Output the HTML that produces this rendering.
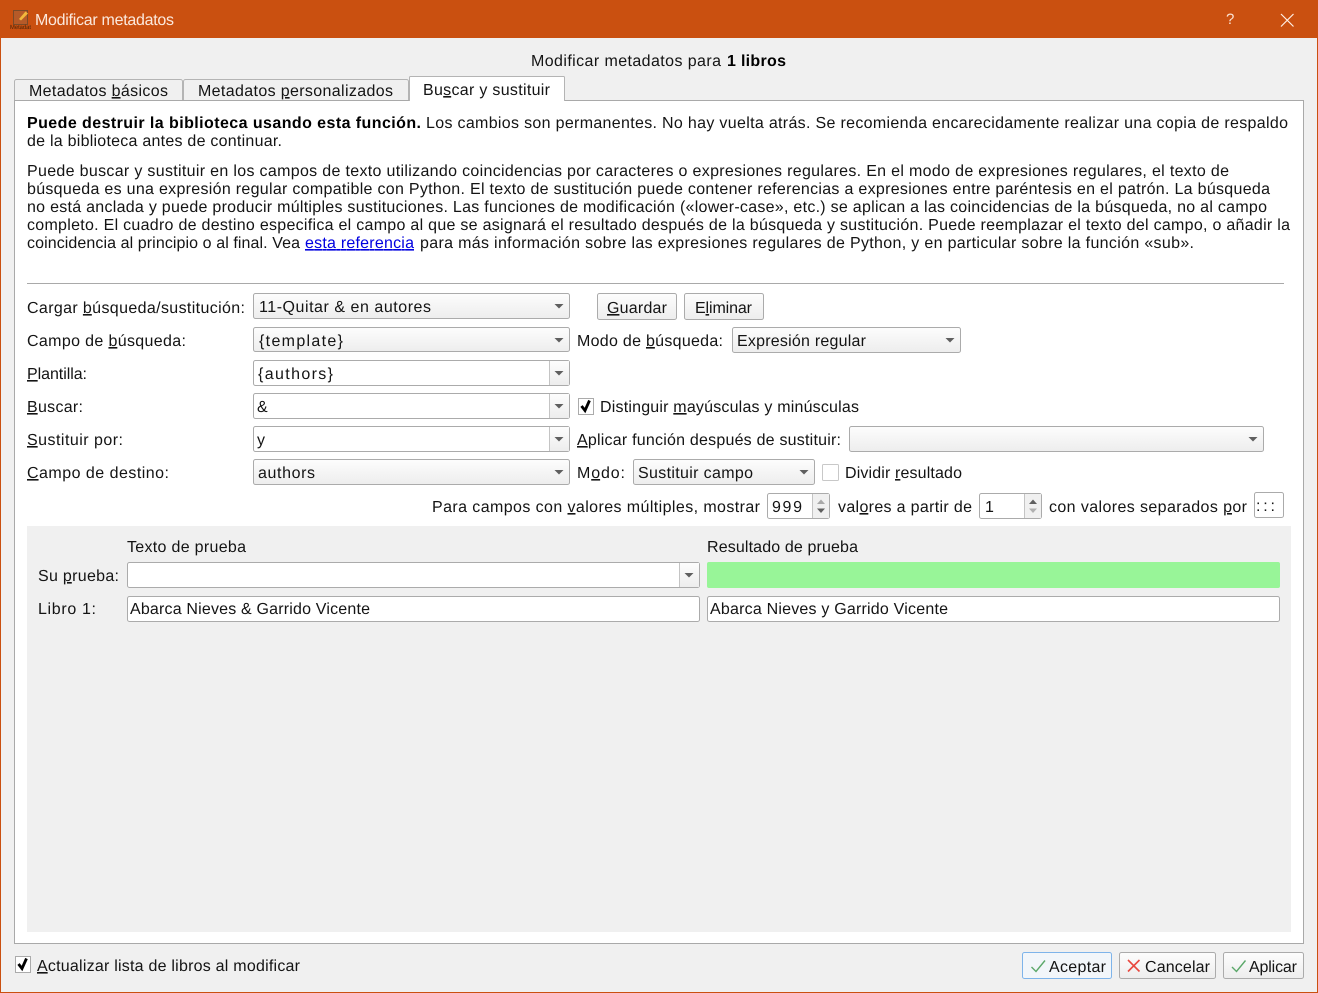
<!DOCTYPE html>
<html lang="es"><head><meta charset="utf-8"><title>Modificar metadatos</title>
<style>
html,body{margin:0;padding:0;width:1318px;height:993px;overflow:hidden;background:#f0f0f0}
svg{display:block}
text{font-family:"Liberation Sans",sans-serif;font-size:16px;fill:#141414;white-space:pre;text-rendering:geometricPrecision}
.u{text-decoration:underline}
.b{font-weight:bold;fill:#000}
.box{fill:#fff;stroke:#ababab}
.cb{fill:url(#g);stroke:#ababab}
.sep{stroke:#c4c4c4}
.ar{fill:#5f5f5f}
</style></head><body>
<svg width="1318" height="993" viewBox="0 0 1318 993" xmlns="http://www.w3.org/2000/svg">
<defs>
<linearGradient id="g" x1="0" y1="0" x2="0" y2="1"><stop offset="0" stop-color="#fdfdfd"/><stop offset="1" stop-color="#ededed"/></linearGradient>
<path id="a" class="ar" d="M-4.500 -2H4.500L0 2.500Z"/>
</defs>
<!-- window -->
<rect x="0" y="0" width="1318" height="993" fill="#ca5010"/>
<rect x="1" y="38" width="1316" height="954" fill="#f0f0f0"/>
<!-- icon -->
<rect x="13.500" y="10.500" width="14" height="14" fill="#b65a28" stroke="#7a4a28"/>
<path d="M19 19L25.500 11.500L28 13.500L21 20.500Z" fill="#f2b83c"/>
<text x="10" y="29" textLength="21" lengthAdjust="spacingAndGlyphs" style="font-size:6px;fill:#4a2408">Metadat</text>
<text x="35" y="25" textLength="139" style="fill:#fbe8dc">Modificar metadatos</text>
<text x="1226" y="24" textLength="8" style="fill:#fbe0cf;font-size:15px">?</text>
<path d="M1281 14L1293.500 26.500M1293.500 14L1281 26.500" stroke="#fff0e6" stroke-width="1.200" fill="none"/>
<!-- heading -->
<text x="531" y="66" textLength="190">Modificar metadatos para</text>
<text x="727" y="66" textLength="59" class="b">1 libros</text>
<!-- tabs -->
<rect x="14.500" y="79.500" width="168" height="22" rx="2" fill="#f0f0f0" stroke="#b4b4b4"/>
<rect x="183.500" y="79.500" width="225" height="22" rx="2" fill="#f0f0f0" stroke="#b4b4b4"/>
<rect x="14.500" y="100.500" width="1289" height="843" fill="#fff" stroke="#a9a9a9"/>
<path d="M409.500 101V77.500Q409.500 76.500 410.500 76.500H563.500Q564.500 76.500 564.500 77.500V101" fill="#fff" stroke="#b4b4b4"/>
<rect x="410" y="99" width="154" height="3" fill="#fff"/>
<text x="29" y="96" textLength="139">Metadatos <tspan class="u">b</tspan>ásicos</text>
<text x="198" y="96" textLength="195">Metadatos <tspan class="u">p</tspan>ersonalizados</text>
<text x="423" y="95" textLength="127">Bu<tspan class="u">s</tspan>car y sustituir</text>
<!-- paragraph -->
<text x="27" y="128" textLength="394" class="b">Puede destruir la biblioteca usando esta función.</text>
<text x="426" y="128" textLength="862">Los cambios son permanentes. No hay vuelta atrás. Se recomienda encarecidamente realizar una copia de respaldo</text>
<text x="27" y="146" textLength="255">de la biblioteca antes de continuar.</text>
<text x="27" y="176" textLength="1202">Puede buscar y sustituir en los campos de texto utilizando coincidencias por caracteres o expresiones regulares. En el modo de expresiones regulares, el texto de</text>
<text x="27" y="194" textLength="1243">búsqueda es una expresión regular compatible con Python. El texto de sustitución puede contener referencias a expresiones entre paréntesis en el patrón. La búsqueda</text>
<text x="27" y="212" textLength="1240">no está anclada y puede producir múltiples sustituciones. Las funciones de modificación («lower-case», etc.) se aplican a las coincidencias de la búsqueda, no al campo</text>
<text x="27" y="230" textLength="1263">completo. El cuadro de destino especifica el campo al que se asignará el resultado después de la búsqueda y sustitución. Puede reemplazar el texto del campo, o añadir la</text>
<text x="27" y="248" textLength="273">coincidencia al principio o al final. Vea</text>
<text x="305" y="248" textLength="109" class="u" style="fill:#0000e0">esta referencia</text>
<text x="420" y="248" textLength="774">para más información sobre las expresiones regulares de Python, y en particular sobre la función «sub».</text>
<rect x="27" y="283" width="1257" height="1" fill="#a9a9a9"/>
<!-- labels -->
<text x="27" y="313" textLength="218">Cargar <tspan class="u">b</tspan>úsqueda/sustitución:</text>
<text x="27" y="346" textLength="159">Campo de <tspan class="u">b</tspan>úsqueda:</text>
<text x="27" y="379" textLength="60"><tspan class="u">P</tspan>lantilla:</text>
<text x="27" y="412" textLength="56"><tspan class="u">B</tspan>uscar:</text>
<text x="27" y="445" textLength="96"><tspan class="u">S</tspan>ustituir por:</text>
<text x="27" y="478" textLength="142"><tspan class="u">C</tspan>ampo de destino:</text>
<!-- left controls -->
<rect x="253.500" y="293.500" width="316" height="25" rx="2" class="cb"/>
<text x="259" y="312" textLength="172">11-Quitar &amp; en autores</text><use href="#a" x="559" y="306"/>
<rect x="253.500" y="327.500" width="316" height="24" rx="2" class="cb"/>
<text x="259" y="346" textLength="84">{template}</text><use href="#a" x="559" y="340"/>
<rect x="253.500" y="360.500" width="316" height="25" rx="2" class="box"/>
<path d="M549.500 361V385" class="sep"/><rect x="550" y="361" width="19" height="24" fill="url(#g)"/><use href="#a" x="559" y="373"/>
<text x="258" y="379" textLength="75">{authors}</text>
<rect x="253.500" y="393.500" width="316" height="25" rx="2" class="box"/>
<path d="M549.500 394V418" class="sep"/><rect x="550" y="394" width="19" height="24" fill="url(#g)"/><use href="#a" x="559" y="406"/>
<text x="257" y="412" textLength="12">&amp;</text>
<rect x="253.500" y="426.500" width="316" height="25" rx="2" class="box"/>
<path d="M549.500 427V451" class="sep"/><rect x="550" y="427" width="19" height="24" fill="url(#g)"/><use href="#a" x="559" y="439"/>
<text x="257" y="445" textLength="9">y</text>
<rect x="253.500" y="459.500" width="316" height="25" rx="2" class="cb"/>
<text x="258" y="478" textLength="57">authors</text><use href="#a" x="559" y="472"/>
<!-- buttons -->
<rect x="597.500" y="293.500" width="79" height="26" rx="2" class="cb"/>
<text x="607" y="313" textLength="60"><tspan class="u">G</tspan>uardar</text>
<rect x="684.500" y="293.500" width="79" height="26" rx="2" class="cb"/>
<text x="695" y="313" textLength="57">E<tspan class="u">l</tspan>iminar</text>
<!-- right controls -->
<text x="577" y="346" textLength="146">Modo de <tspan class="u">b</tspan>úsqueda:</text>
<rect x="732.500" y="327.500" width="228" height="25" rx="2" class="cb"/>
<text x="737" y="346" textLength="129">Expresión regular</text><use href="#a" x="950" y="340"/>
<rect x="578.500" y="398.500" width="15" height="16" fill="#fff" stroke="#ababab"/>
<path d="M581.500 406L585 410.500L589.500 400.500" fill="none" stroke="#000" stroke-width="2.800"/>
<text x="600" y="412" textLength="259">Distinguir <tspan class="u">m</tspan>ayúsculas y minúsculas</text>
<text x="577" y="445" textLength="264"><tspan class="u">A</tspan>plicar función después de sustituir:</text>
<rect x="849.500" y="426.500" width="414" height="25" rx="2" class="cb"/><use href="#a" x="1253" y="439"/>
<text x="577" y="478" textLength="48">M<tspan class="u">o</tspan>do:</text>
<rect x="633.500" y="459.500" width="181" height="25" rx="2" class="cb"/>
<text x="638" y="478" textLength="115">Sustituir campo</text><use href="#a" x="804" y="472"/>
<rect x="822.500" y="464.500" width="16" height="16" rx="1" fill="#fff" stroke="#c8c8c8"/>
<text x="845" y="478" textLength="117">Dividir <tspan class="u">r</tspan>esultado</text>
<!-- spin row -->
<text x="432" y="512" textLength="328">Para campos con <tspan class="u">v</tspan>alores múltiples, mostrar</text>
<rect x="767.500" y="493.500" width="62" height="25" rx="2" class="box"/>
<rect x="813" y="494" width="16" height="24" fill="#f0f0f0"/><path d="M812.500 494V518" class="sep"/>
<path d="M817 504L821 499.500L825 504Z" fill="#a8a8a8"/><path d="M817 508.500H825L821 513Z" fill="#5f5f5f"/>
<text x="772" y="512" textLength="30">999</text>
<text x="838" y="512" textLength="134">val<tspan class="u">o</tspan>res a partir de</text>
<rect x="979.500" y="493.500" width="62" height="25" rx="2" class="box"/>
<rect x="1025" y="494" width="16" height="24" fill="#f0f0f0"/><path d="M1024.500 494V518" class="sep"/>
<path d="M1029 504L1033 499.500L1037 504Z" fill="#5f5f5f"/><path d="M1029 508.500H1037L1033 513Z" fill="#b0b0b0"/>
<text x="985" y="512" textLength="8">1</text>
<text x="1049" y="512" textLength="198">con valores separados <tspan class="u">p</tspan>or</text>
<rect x="1254.500" y="492.500" width="29" height="25" rx="2" class="box"/>
<text x="1256" y="511" textLength="19">:::</text>
<!-- test area -->
<rect x="27" y="526" width="1264" height="406" fill="#f0f0f0"/>
<text x="127" y="552" textLength="119">Texto de prueba</text>
<text x="707" y="552" textLength="151">Resultado de prueba</text>
<text x="38" y="581" textLength="81">Su <tspan class="u">p</tspan>rueba:</text>
<text x="38" y="614" textLength="58">Libro 1:</text>
<rect x="127.500" y="562.500" width="572" height="25" rx="2" class="box"/>
<path d="M679.500 563V587" class="sep"/><rect x="680" y="563" width="19" height="24" fill="url(#g)"/><use href="#a" x="689" y="575"/>
<rect x="707" y="562" width="573" height="26" rx="2" fill="#98f598"/>
<rect x="127.500" y="596.500" width="572" height="25" rx="2" class="box"/>
<text x="130" y="614" textLength="240">Abarca Nieves &amp; Garrido Vicente</text>
<rect x="707.500" y="596.500" width="572" height="25" rx="2" class="box"/>
<text x="710" y="614" textLength="238">Abarca Nieves y Garrido Vicente</text>
<!-- footer -->
<rect x="15.500" y="956.500" width="15" height="16" fill="#fff" stroke="#ababab"/>
<path d="M18.500 964L22 968.500L26.500 958.500" fill="none" stroke="#000" stroke-width="2.800"/>
<text x="37" y="971" textLength="263"><tspan class="u">A</tspan>ctualizar lista de libros al modificar</text>
<rect x="1022.500" y="952.500" width="89" height="26" rx="2" fill="#f2f6fa" stroke="#7eb4ea"/>
<path d="M1031.500 967L1036 971.500L1045 960.500" fill="none" stroke="#5ba86a" stroke-width="1.400"/>
<text x="1049" y="972" textLength="57">Aceptar</text>
<rect x="1119.500" y="952.500" width="96" height="26" rx="2" class="cb"/>
<path d="M1128 960L1139.500 971.500M1139.500 960L1128 971.500" fill="none" stroke="#e8483f" stroke-width="1.600"/>
<text x="1145" y="972" textLength="65">Cancelar</text>
<rect x="1223.500" y="952.500" width="80" height="26" rx="2" class="cb"/>
<path d="M1232 967L1236.500 971.500L1245.500 960.500" fill="none" stroke="#5ba86a" stroke-width="1.400"/>
<text x="1249" y="972" textLength="48">Aplicar</text>
</svg>
</body></html>
